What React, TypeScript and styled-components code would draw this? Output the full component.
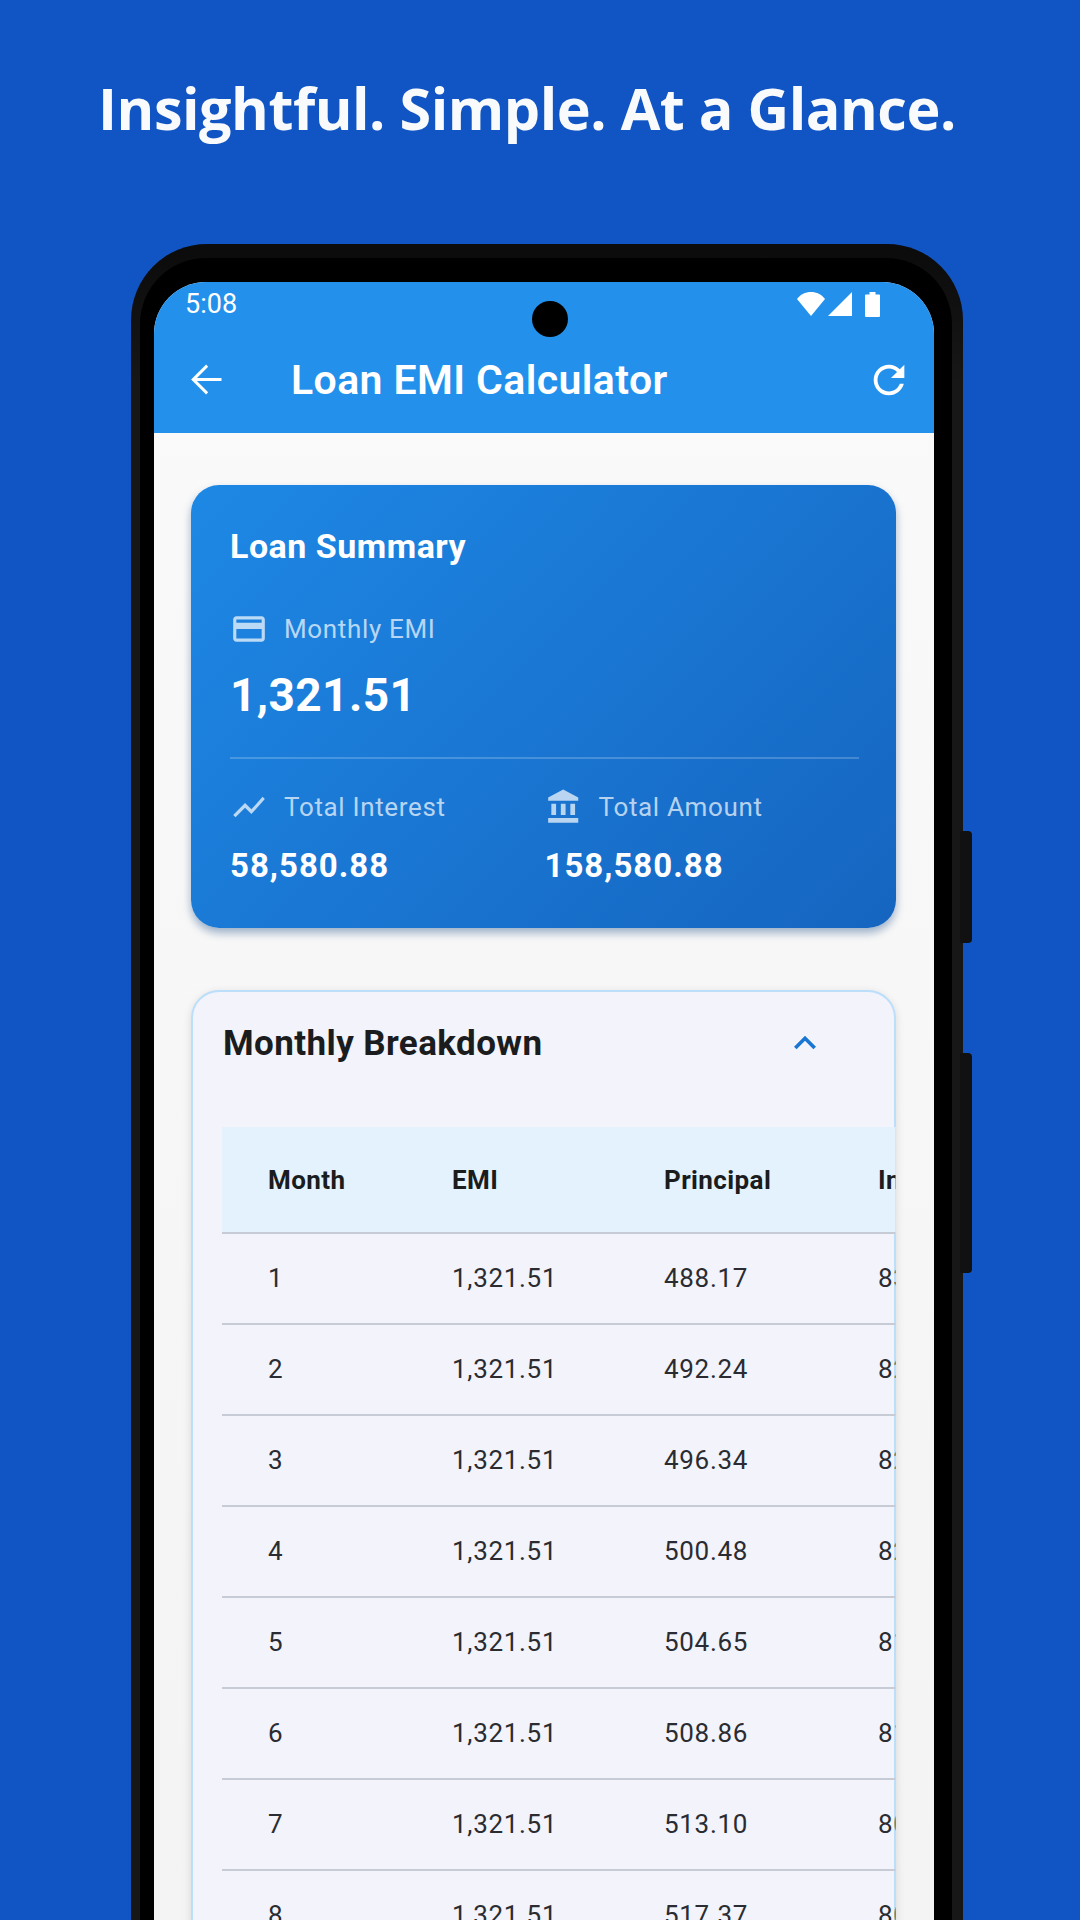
import React from 'react';
import styled, { createGlobalStyle } from 'styled-components';

const GlobalStyle = createGlobalStyle`
    html, body {
        margin: 0;
        padding: 0;
        background: #1155c4;
    }
    * {
        box-sizing: border-box;
    }
`

const rows = [
    { month: 1, emi: '1,321.51', principal: '488.17', interest: '833.34' },
    { month: 2, emi: '1,321.51', principal: '492.24', interest: '829.27' },
    { month: 3, emi: '1,321.51', principal: '496.34', interest: '825.17' },
    { month: 4, emi: '1,321.51', principal: '500.48', interest: '821.03' },
    { month: 5, emi: '1,321.51', principal: '504.65', interest: '816.86' },
    { month: 6, emi: '1,321.51', principal: '508.86', interest: '812.65' },
    { month: 7, emi: '1,321.51', principal: '513.10', interest: '808.41' },
    { month: 8, emi: '1,321.51', principal: '517.37', interest: '804.14' },
];

function MaterialIcon({ d, size, color }: { d: string; size: number; color: string }) {
    return (
        <svg width={size} height={size} viewBox="0 0 24 24" fill={color} style={{ flexShrink: 0 }}>
            <path d={d} />
        </svg>
    );
}

const ICONS = {
    back: 'M20 11.2H6.9l6-6L11.8 4l-8 8 8 8 1.1-1.2-6-6H20z',
    refresh: 'M17.65 6.35C16.2 4.9 14.21 4 12 4c-4.42 0-7.99 3.58-7.99 8s3.57 8 7.99 8c3.73 0 6.84-2.55 7.73-6h-2.08c-.82 2.33-3.04 4-5.65 4-3.31 0-6-2.69-6-6s2.69-6 6-6c1.66 0 3.14.69 4.22 1.78L13 11h7V4l-2.35 2.35z',
    card: 'M20 4H4c-1.11 0-1.99.89-1.99 2L2 18c0 1.11.89 2 2 2h16c1.11 0 2-.89 2-2V6c0-1.11-.89-2-2-2zm0 14H4v-6h16v6zm0-10H4V6h16v2z',
    showChart: 'M3.5 18.49l6-6.01 4 4L22 6.92l-1.41-1.41-7.09 7.97-4-4L2 16.99z',
    bank: 'M4 10v7h3v-7H4zm6 0v7h3v-7h-3zM2 22h19v-3H2v3zm14-12v7h3v-7h-3zm-4.5-9L2 6v2h19V6l-9.5-5z',
    chevron: 'M12 8l-6 6 1.41 1.41L12 10.83l4.59 4.58L18 14z',
};

const LABEL_ICON = 'rgba(255,255,255,0.7)';

function App() {
    return (
        <Page>
            <GlobalStyle />
            <Headline>Insightful. Simple. At a Glance.</Headline>
            <PhoneBody>
                <VolumeKey />
                <PowerKey />
                <Bezel>
                    <Screen>
                        <Camera />
                        <StatusBar>
                            <Clock>5:08</Clock>
                            <StatusIcons>
                                <svg width="28" height="24" viewBox="0 0 28 24" fill="#fff">
                                    <path d="M0 7C3.300 2.600 8.400 0 14 0s10.700 2.600 14 7L14 24z" />
                                </svg>
                                <svg width="24" height="24" viewBox="0 0 24 24" fill="#fff">
                                    <path d="M24 0v24H0z" />
                                </svg>
                                <BatteryGlyph width="15" height="25" viewBox="0 0 15 25" fill="#fff">
                                    <path d="M4.500 0h6v2.500H14a1 1 0 0 1 1 1V24a1 1 0 0 1-1 1H1a1 1 0 0 1-1-1V3.500a1 1 0 0 1 1-1h3.500z" />
                                </BatteryGlyph>
                            </StatusIcons>
                        </StatusBar>
                        <AppBar>
                            <MaterialIcon d={ICONS.back} size={45} color="#fff" />
                            <AppTitle>Loan EMI Calculator</AppTitle>
                            <MaterialIcon d={ICONS.refresh} size={46} color="#fff" />
                        </AppBar>
                        <Content>
                            <SummaryCard>
                                <SummaryTitle>Loan Summary</SummaryTitle>
                                <LabelRow $top={42}>
                                    <MaterialIcon d={ICONS.card} size={38} color={LABEL_ICON} />
                                    <Label>Monthly EMI</Label>
                                </LabelRow>
                                <BigValue>1,321.51</BigValue>
                                <Divider />
                                <TotalsGrid>
                                    <div>
                                        <LabelRow>
                                            <MaterialIcon d={ICONS.showChart} size={38} color={LABEL_ICON} />
                                            <Label>Total Interest</Label>
                                        </LabelRow>
                                        <TotalValue>58,580.88</TotalValue>
                                    </div>
                                    <div>
                                        <LabelRow>
                                            <MaterialIcon d={ICONS.bank} size={38} color={LABEL_ICON} />
                                            <Label>Total Amount</Label>
                                        </LabelRow>
                                        <TotalValue>158,580.88</TotalValue>
                                    </div>
                                </TotalsGrid>
                            </SummaryCard>
                            <BreakdownCard>
                                <BreakdownHeader>
                                    <BreakdownTitle>Monthly Breakdown</BreakdownTitle>
                                    <MaterialIcon d={ICONS.chevron} size={44} color="#1976d2" />
                                </BreakdownHeader>
                                <Table>
                                    <HeaderRow>
                                        <span>Month</span>
                                        <span>EMI</span>
                                        <span>Principal</span>
                                        <span>Interest</span>
                                    </HeaderRow>
                                    {rows.map(row => (
                                        <BodyRow key={row.month}>
                                            <span>{row.month}</span>
                                            <span>{row.emi}</span>
                                            <span>{row.principal}</span>
                                            <span>{row.interest}</span>
                                        </BodyRow>
                                    ))}
                                </Table>
                            </BreakdownCard>
                        </Content>
                    </Screen>
                </Bezel>
            </PhoneBody>
        </Page>
    );
}

const Page = styled.div`
    width: 1080px;
    height: 1920px;
    overflow: hidden;
    background: #1155c4;
    padding-top: 72px;
`
const Headline = styled.h1`
    margin: 0 0 100px;
    height: 72px;
    padding-left: 98px;
    line-height: 72px;
    font-family: 'Open Sans', sans-serif;
    font-weight: 700;
    font-size: 57.5px;
    letter-spacing: -0.47px;
    color: #f8fafc;
    white-space: nowrap;
`
const PhoneBody = styled.div`
    position: relative;
    width: 832px;
    height: 1800px;
    margin-left: 131px;
    padding: 14px 11px 0 9px;
    background: linear-gradient(180deg, #0b0b0b 0, #171717 140px);
    border-radius: 76px 76px 0 0;
`
const SideKey = styled.div`
    position: absolute;
    right: -9px;
    width: 12px;
    background: #111;
    border-radius: 0 4px 4px 0;
`
const VolumeKey = styled(SideKey)`
    top: 587px;
    height: 112px;
`
const PowerKey = styled(SideKey)`
    top: 809px;
    height: 220px;
`
const Bezel = styled.div`
    height: 100%;
    padding: 24px 18px 0 14px;
    background: #000;
    border-radius: 66px 66px 0 0;
`
const Screen = styled.div`
    position: relative;
    height: 100%;
    overflow: hidden;
    border-radius: 52px 52px 0 0;
    background: linear-gradient(180deg, #fafafa 0%, #f3f3f3 100%);
`
const Camera = styled.div`
    position: absolute;
    top: 19px;
    left: 378px;
    width: 36px;
    height: 36px;
    border-radius: 50%;
    background: #000;
`
const StatusBar = styled.div`
    display: flex;
    align-items: center;
    justify-content: space-between;
    height: 44px;
    padding: 0 54px 0 31px;
    background: #2391ec;
    color: #fff;
`
const Clock = styled.span`
    font-family: Roboto, sans-serif;
    font-size: 27px;
`
const StatusIcons = styled.div`
    display: flex;
    align-items: center;
    gap: 3px;
`
const BatteryGlyph = styled.svg`
    margin-left: 10px;
`
const AppBar = styled.div`
    display: flex;
    align-items: center;
    height: 107px;
    padding: 0 22px 0 30px;
    background: #2391ec;
`
const AppTitle = styled.div`
    flex: 1;
    margin-left: 62px;
    font-family: Roboto, sans-serif;
    font-weight: 600;
    font-size: 41px;
    letter-spacing: 0.4px;
    color: #fff;
`
const Content = styled.div`
    padding: 52px 38px 0 37px;
`
const SummaryCard = styled.section`
    height: 443px;
    padding: 40px 37px 40px 39px;
    border-radius: 28px;
    background: linear-gradient(135deg, #1e88e5 0%, #1565c0 100%);
    box-shadow: 0 5px 9px rgba(21, 70, 130, 0.4);
    color: #fff;
    font-family: Roboto, sans-serif;
`
const SummaryTitle = styled.h2`
    margin: 0;
    font-size: 34px;
    line-height: 42px;
    font-weight: 700;
    letter-spacing: 0.5px;
`
const LabelRow = styled.div<{ $top?: number }>`
    display: flex;
    align-items: center;
    height: 40px;
    margin-top: ${p => p.$top ?? 0}px;
    gap: 16px;
`
const Label = styled.span`
    font-size: 26px;
    letter-spacing: 0.65px;
    color: rgba(255, 255, 255, 0.7);
`
const BigValue = styled.div`
    margin-top: 18px;
    line-height: 56px;
    font-size: 46px;
    font-weight: 700;
    letter-spacing: 0.4px;
`
const Divider = styled.div`
    height: 2px;
    margin-top: 34px;
    background: rgba(255, 255, 255, 0.2);
`
const TotalsGrid = styled.div`
    display: grid;
    grid-template-columns: 1fr 1fr;
    margin-top: 28px;
`
const TotalValue = styled.div`
    margin-top: 17px;
    line-height: 44px;
    font-size: 33px;
    font-weight: 700;
    letter-spacing: 1px;
`
const BreakdownCard = styled.section`
    height: 1000px;
    margin-top: 62px;
    border: 2px solid #bbdefb;
    border-radius: 28px;
    background: #f2f3fb;
    box-shadow: 0 2px 8px rgba(0, 0, 0, 0.12);
    overflow: clip;
    overflow-clip-margin: 1.5px;
    font-family: Roboto, sans-serif;
    color: #1a1c1e;
`
const BreakdownHeader = styled.div`
    display: flex;
    align-items: center;
    justify-content: space-between;
    height: 102px;
    padding: 0 67px 0 30px;
`
const BreakdownTitle = styled.h3`
    margin: 0;
    font-size: 35px;
    font-weight: 700;
    letter-spacing: 0.4px;
`
const Table = styled.div`
    margin: 33px 0 0 29px;
    width: 840px;
`
const TableRow = styled.div`
    display: grid;
    grid-template-columns: 184px 212px 214px 1fr;
    align-items: center;
    padding-left: 46px;
    border-bottom: 2px solid #c6cbd6;
    font-size: 26px;
    white-space: nowrap;
`
const HeaderRow = styled(TableRow)`
    height: 107px;
    background: #e3f2fd;
    font-weight: 700;
    letter-spacing: 0.4px;
`
const BodyRow = styled(TableRow)`
    height: 91px;
    padding-bottom: 2px;
    letter-spacing: 0.7px;
    color: #2a2c31;
`

export default App;
